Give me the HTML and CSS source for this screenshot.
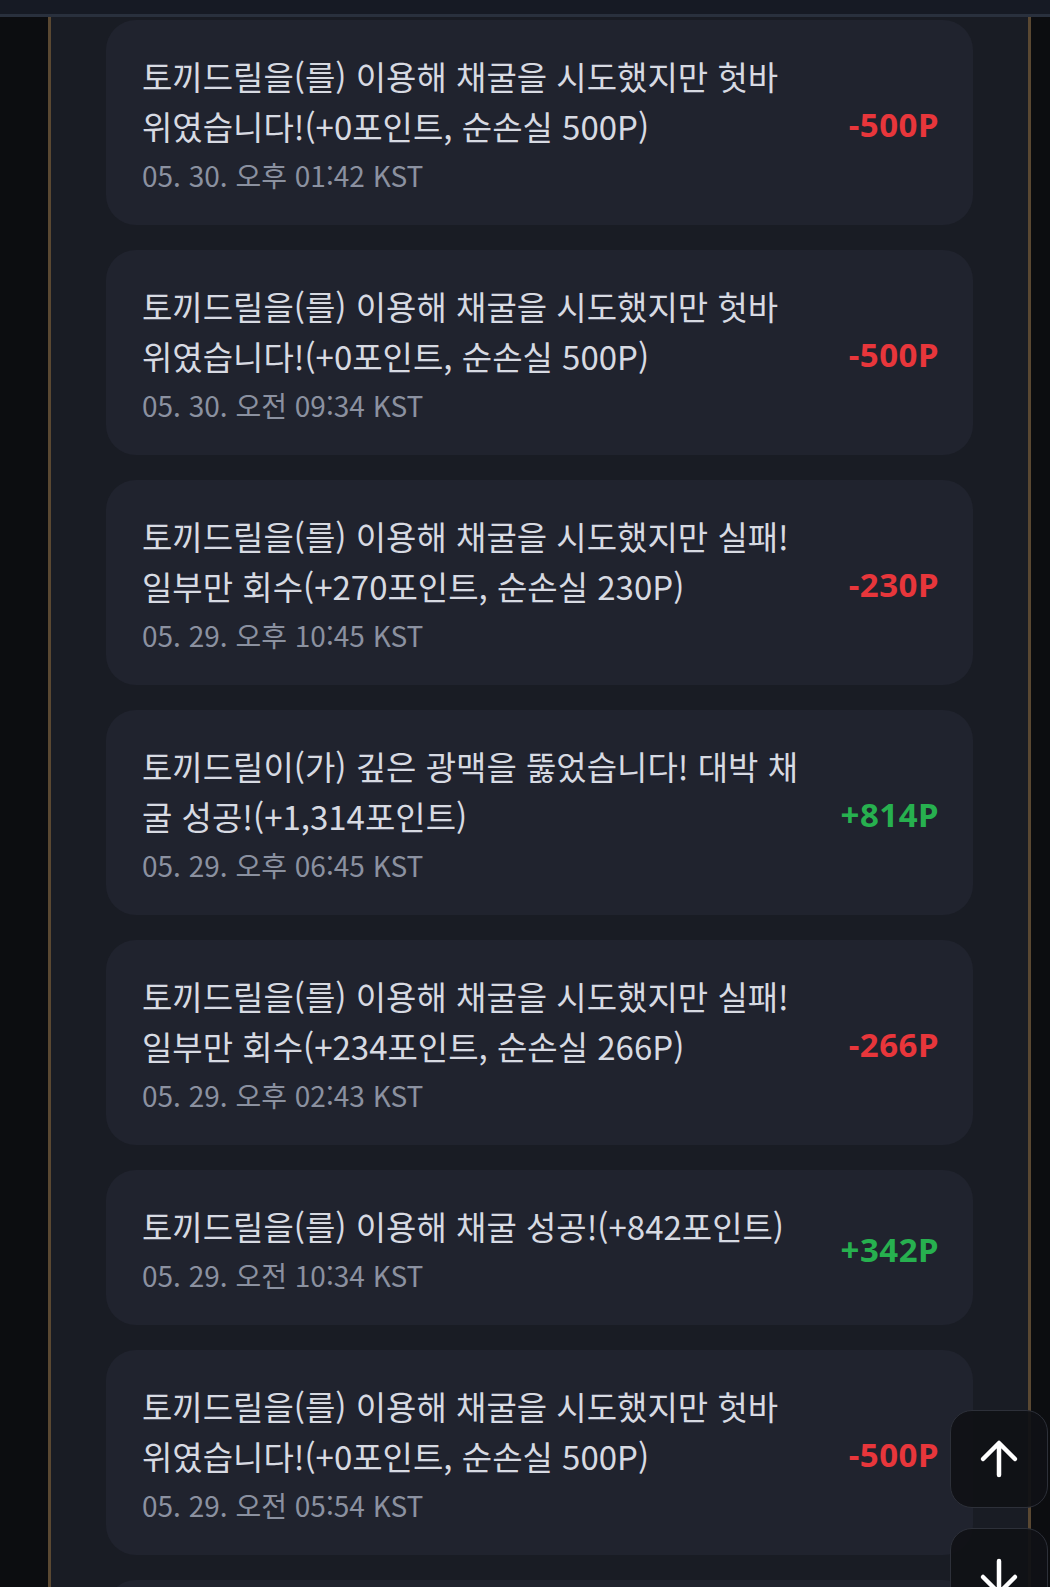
FILE: index.html
```html
<!DOCTYPE html>
<html lang="ko">
<head>
<meta charset="utf-8">
<title>채굴 기록</title>
<link rel="stylesheet" href="styles.css">
</head>
<body>
<div class="topbar"></div>
<div class="frame">
  <main class="panel">
    <ul class="log">
      <li class="card">
        <div class="info">
          <p class="msg">토끼드릴을(를) 이용해 채굴을 시도했지만 헛바<br>위였습니다!(+0포인트, 순손실 500P)</p>
          <p class="date">05. 30. 오후 01:42 KST</p>
        </div>
        <span class="amt loss">-500P</span>
      </li>
      <li class="card">
        <div class="info">
          <p class="msg">토끼드릴을(를) 이용해 채굴을 시도했지만 헛바<br>위였습니다!(+0포인트, 순손실 500P)</p>
          <p class="date">05. 30. 오전 09:34 KST</p>
        </div>
        <span class="amt loss">-500P</span>
      </li>
      <li class="card">
        <div class="info">
          <p class="msg">토끼드릴을(를) 이용해 채굴을 시도했지만 실패!<br>일부만 회수(+270포인트, 순손실 230P)</p>
          <p class="date">05. 29. 오후 10:45 KST</p>
        </div>
        <span class="amt loss">-230P</span>
      </li>
      <li class="card">
        <div class="info">
          <p class="msg">토끼드릴이(가) 깊은 광맥을 뚫었습니다! 대박 채<br>굴 성공!(+1,314포인트)</p>
          <p class="date">05. 29. 오후 06:45 KST</p>
        </div>
        <span class="amt gain">+814P</span>
      </li>
      <li class="card">
        <div class="info">
          <p class="msg">토끼드릴을(를) 이용해 채굴을 시도했지만 실패!<br>일부만 회수(+234포인트, 순손실 266P)</p>
          <p class="date">05. 29. 오후 02:43 KST</p>
        </div>
        <span class="amt loss">-266P</span>
      </li>
      <li class="card">
        <div class="info">
          <p class="msg">토끼드릴을(를) 이용해 채굴 성공!(+842포인트)</p>
          <p class="date">05. 29. 오전 10:34 KST</p>
        </div>
        <span class="amt gain">+342P</span>
      </li>
      <li class="card">
        <div class="info">
          <p class="msg">토끼드릴을(를) 이용해 채굴을 시도했지만 헛바<br>위였습니다!(+0포인트, 순손실 500P)</p>
          <p class="date">05. 29. 오전 05:54 KST</p>
        </div>
        <span class="amt loss">-500P</span>
      </li>
      <li class="card card-peek"></li>
    </ul>
  </main>
</div>
<div class="scroll-btns">
  <button class="sbtn" aria-label="맨 위로">
    <svg viewBox="0 0 40 40" width="40" height="40"><path d="M20 36V5M4 20L20 4L36 20" fill="none" stroke="#fff" stroke-width="4.5" stroke-linecap="round" stroke-linejoin="round"/></svg>
  </button>
  <button class="sbtn" aria-label="맨 아래로">
    <svg viewBox="0 0 40 40" width="40" height="40"><path d="M20 4V35M4 20L20 36L36 20" fill="none" stroke="#fff" stroke-width="4.5" stroke-linecap="round" stroke-linejoin="round"/></svg>
  </button>
</div>
</body>
</html>
```

FILE: styles.css
```css
* { box-sizing: border-box; }
html, body {
  margin: 0;
  padding: 0;
  height: 1587px;
  overflow: hidden;
  background: #0c0d10;
  font-family: "Noto Sans CJK KR", "Noto Sans", sans-serif;
}
.topbar {
  height: 17px;
  background: #161a24;
  border-bottom: 3px solid #29303d;
}
.frame {
  padding: 0 19px 0 48px;
  height: 1570px;
}
.panel {
  height: 100%;
  background: #191c24;
  border-left: 3px solid #5a4832;
  border-right: 3px solid #5a4832;
  padding: 3px 55px 0 55px;
  overflow: hidden;
}
.log {
  list-style: none;
  margin: 0;
  padding: 0;
  display: flex;
  flex-direction: column;
  gap: 25px;
}
.card {
  background: #20232e;
  border-radius: 30px;
  padding: 31px 34px 32px 36px;
  display: flex;
  align-items: center;
  justify-content: space-between;
}
.card-peek { height: 155px; }
.info { min-width: 0; }
.msg {
  margin: 0;
  font-size: 33px;
  line-height: 50px;
  letter-spacing: 0;
  color: #d7dae2;
}
.date {
  margin: 6px 0 0;
  font-size: 28px;
  line-height: 36px;
  color: #8b91a0;
}
.amt {
  font-family: "Noto Sans", "Noto Sans CJK KR", sans-serif;
  font-weight: 700;
  font-size: 33px;
  line-height: 40px;
  letter-spacing: 0.5px;
  margin-top: 6px;
}
.loss { color: #e8363b; }
.gain { color: #27b04f; }
.scroll-btns {
  position: fixed;
  left: 950px;
  top: 1410px;
  display: flex;
  flex-direction: column;
  gap: 20px;
}
.sbtn {
  width: 98px;
  height: 98px;
  padding: 0;
  border-radius: 22px;
  background: rgba(16, 17, 22, 0.93);
  border: 1.5px solid #2d3039;
  display: flex;
  align-items: center;
  justify-content: center;
}
```
